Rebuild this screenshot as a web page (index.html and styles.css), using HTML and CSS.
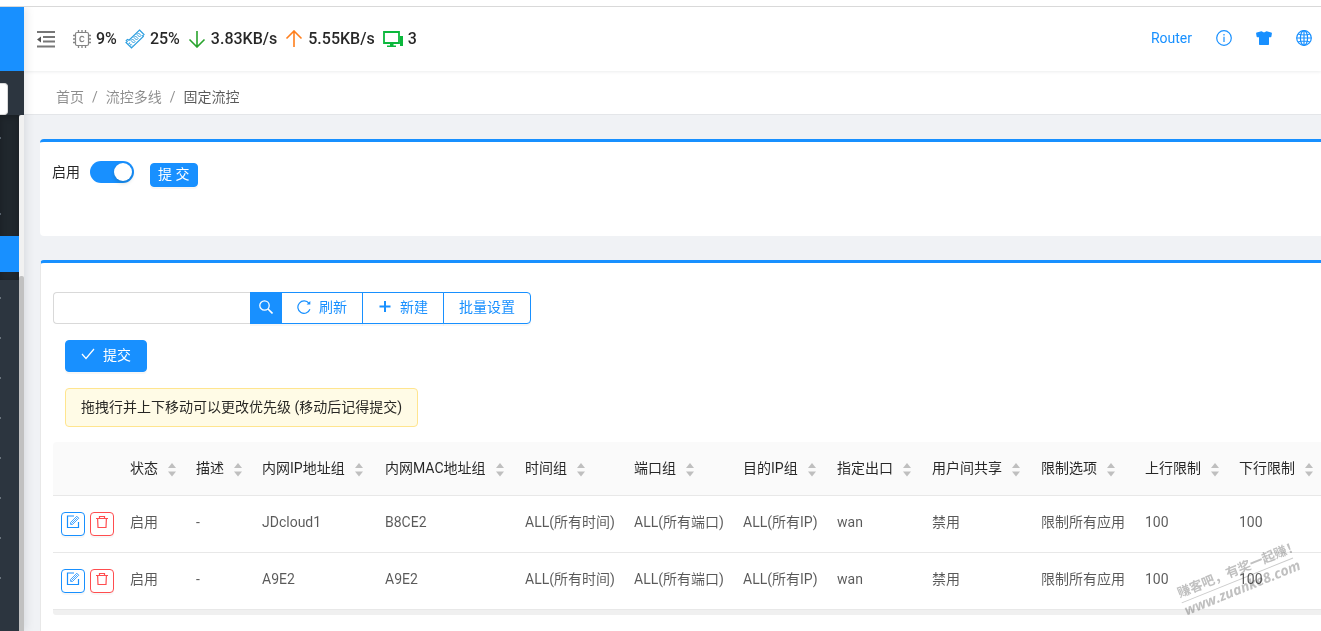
FILE: index.html
```
<!DOCTYPE html>
<html lang="zh-CN">
<head>
<meta charset="utf-8">
<title>固定流控</title>
<link rel="stylesheet" href="styles.css">
</head>
<body>
<svg class="defs" aria-hidden="true">
  <symbol id="edit" viewBox="0 0 14 14"><g fill="none" stroke="currentColor"><path d="M8 1H1.500V12.500H12.500V7" stroke-width="1.200"/><path d="M4.600 9.400V7.400L10.800 1.200L12.800 3.200L6.600 9.400ZM5.500 8.500L11.500 2.500" stroke-opacity=".8"/></g></symbol>
  <symbol id="trash" viewBox="0 0 14 14"><path d="M1 3.500H13M4.500 3.500V1.500H9.500V3.500M2.600 3.500L3 12.500H11L11.400 3.500" fill="none" stroke="currentColor" stroke-width="1.200"/></symbol>
  <symbol id="sort" viewBox="0 0 8 14"><path d="M0 5L4 0L8 5ZM0 8.500H8L4 13.500Z" fill="#bfbfbf"/></symbol>
</svg>
<div class="app">
  <aside class="side">
    <div class="logo"></div>
    <div class="side-search"><input type="text" aria-label="菜单搜索"></div>
    <div class="side-body">
      <nav class="menu">
        <div class="submenu">
          <span class="tick tick-a"></span><span class="tick tick-b"></span>
          <a class="current" href="#" aria-label="固定流控"></a>
        </div>
        <div class="items"><i></i><i></i><i></i><i></i><i></i><i></i><i></i><i></i></div>
      </nav>
      <div class="track"><div class="thumb"></div></div>
    </div>
  </aside>
  <div class="main">
    <header class="header">
      <button class="plain fold" aria-label="收起菜单"><svg width="18" height="17" viewBox="0 0 18 17"><path d="M0 1H18M6 6H18M6 10.500H18M0 15.500H18" stroke="#777" stroke-width="1.800"/><path d="M0 8.500L4 5.500V11.500Z" fill="#555"/></svg></button>
      <div class="stats">
        <span class="stat"><svg width="18" height="18" viewBox="0 0 18 18" fill="none" stroke="#858585"><rect x="2.500" y="2.500" width="13" height="13" rx="1.500" stroke-width="1.200"/><path d="M5.500 0V2.500M9 0V2.500M12.500 0V2.500M5.500 15.500V18M9 15.500V18M12.500 15.500V18M0 5.500H2.500M0 9H2.500M0 12.500H2.500M15.500 5.500H18M15.500 9H18M15.500 12.500H18" stroke-width="1.300"/><path d="M11 7.700C10.700 6.700 10 6.300 9 6.300C7.600 6.300 6.900 7.400 6.900 9S7.600 11.700 9 11.700C10 11.700 10.700 11.300 11 10.300" stroke-width="1.200"/></svg>9%</span>
        <span class="stat"><svg width="20" height="20" viewBox="0 0 20 20" fill="none" stroke="#2e9fe0"><path d="M14.500 1L19 5.500L17.700 6.800L18.300 7.400L6.500 19L1 13.500L2.200 12.300L1.300 11.500L2.500 10.500L4 11.200Z" stroke-width="1.200"/><path d="M13.500 4L16 6.500L14.500 8L12 5.500ZM10.500 7L13 9.500L11.500 11L9 8.500ZM7.500 10L10 12.500L8.500 14L6 11.500Z"/><path d="M4 14L7 17" stroke-dasharray="1 1" stroke-width="2"/></svg>25%</span>
        <span class="stat"><svg width="18" height="18" viewBox="0 0 18 18"><path d="M9 1V17M1.500 9.500L9 17L16.500 9.500" fill="none" stroke="#28a32c" stroke-width="1.600"/></svg><span class="rate">3.83KB/s</span></span>
        <span class="stat"><svg width="18" height="18" viewBox="0 0 18 18"><path d="M9 17V1M1.500 8.500L9 1L16.500 8.500" fill="none" stroke="#ff7f1c" stroke-width="1.600"/></svg><span class="rate">5.55KB/s</span></span>
        <span class="stat"><svg width="20" height="18" viewBox="0 0 20 18"><path d="M1 2H16V13H1Z" fill="none" stroke="#0bb83c" stroke-width="1.800"/><path d="M17 6H20V16H17ZM7 13H10.500V15.500H13V17H4V15.500H7Z" fill="#0bb83c"/></svg>3</span>
      </div>
      <nav class="tools">
        <a href="#">Router</a>
        <a href="#" aria-label="信息"><svg width="16" height="16" viewBox="0 0 16 16"><circle cx="8" cy="8" r="7.300" fill="none" stroke="currentColor" stroke-width="1.200"/><path d="M8 6.800V12M8 4V5.400" stroke="currentColor" stroke-width="1.200"/></svg></a>
        <a href="#" aria-label="主题"><svg width="16" height="16" viewBox="0 0 16 16"><path d="M4.500 1.500C5.500 1 6 1.300 6.500 1.700C7.500 2.400 8.500 2.400 9.500 1.700C10 1.300 10.500 1 11.500 1.500L15.200 2.400Q16 2.600 15.900 3.400L15.400 6.500Q15.200 7.300 14.400 7.200H13V14.300Q13 15 12.300 15H3.700Q3 15 3 14.300V7.200H1.600Q0.800 7.300 0.600 6.500L0.100 3.400Q0 2.600 0.800 2.400Z" fill="currentColor"/></svg></a>
        <a href="#" aria-label="语言"><svg width="16" height="16" viewBox="0 0 16 16" fill="none" stroke="currentColor" stroke-width="1.200"><circle cx="8" cy="8" r="7.300"/><ellipse cx="8" cy="8" rx="3.600" ry="7.300"/><path d="M8 .7V15.300M.7 8H15.300M2 4Q8 6 14 4M2 12Q8 10 14 12"/></svg></a>
      </nav>
    </header>
    <nav class="crumbs" aria-label="面包屑"><a href="#">首页</a><span>/</span><a href="#">流控多线</a><span>/</span><b>固定流控</b></nav>
    <main class="content">
      <section class="card enable">
        <label for="enable">启用</label>
        <input class="switch" type="checkbox" role="switch" id="enable" checked>
        <button class="btn primary small">提 交</button>
      </section>
      <section class="card list">
        <div class="bar">
          <input class="search" type="text" aria-label="搜索">
          <button class="btn primary icon-only" aria-label="搜索"><svg width="14" height="14" viewBox="0 0 14 14"><path d="M9 9L13.500 13.500" stroke="#fff" stroke-width="1.600"/><circle cx="5.500" cy="5.500" r="4.700" fill="none" stroke="#fff" stroke-width="1.300"/></svg></button>
          <button class="btn ghost"><svg width="14" height="14" viewBox="0 0 14 14"><path d="M12 3.400A6.200 6.200 0 1 0 12.900 9.300" fill="none" stroke="currentColor" stroke-width="1.200"/><path d="M13.300 1V4.600H9.600Z" fill="currentColor"/></svg>刷新</button>
          <button class="btn ghost"><svg width="14" height="14" viewBox="0 0 14 14"><path d="M7 1V12M1.500 6.500H12.500" stroke="currentColor" stroke-width="2"/></svg>新建</button>
          <button class="btn ghost last">批量设置</button>
        </div>
        <div class="notes">
          <button class="btn primary"><svg width="14" height="14" viewBox="0 0 14 14"><path d="M1 6L5 10.500L13 1" fill="none" stroke="#fff" stroke-width="1.200"/></svg>提交</button>
          <p class="alert">拖拽行并上下移动可以更改优先级 (移动后记得提交)</p>
        </div>
        <table>
          <colgroup><col class="w69"><col class="w66"><col class="w66"><col class="w123"><col class="w140"><col class="w109"><col class="w109"><col class="w94"><col class="w95"><col class="w109"><col class="w104"><col class="w94"><col></colgroup>
          <thead><tr>
            <td></td>
            <th>状态<svg><use href="#sort"/></svg></th><th>描述<svg><use href="#sort"/></svg></th><th>内网IP地址组<svg><use href="#sort"/></svg></th><th>内网MAC地址组<svg><use href="#sort"/></svg></th><th>时间组<svg><use href="#sort"/></svg></th><th>端口组<svg><use href="#sort"/></svg></th><th>目的IP组<svg><use href="#sort"/></svg></th><th>指定出口<svg><use href="#sort"/></svg></th><th>用户间共享<svg><use href="#sort"/></svg></th><th>限制选项<svg><use href="#sort"/></svg></th><th>上行限制<svg><use href="#sort"/></svg></th><th>下行限制<svg><use href="#sort"/></svg></th>
          </tr></thead>
          <tbody>
            <tr><td><div class="acts"><button class="act" aria-label="编辑"><svg><use href="#edit"/></svg></button><button class="act danger" aria-label="删除"><svg><use href="#trash"/></svg></button></div></td><td>启用</td><td>-</td><td>JDcloud1</td><td>B8CE2</td><td>ALL(所有时间)</td><td>ALL(所有端口)</td><td>ALL(所有IP)</td><td>wan</td><td>禁用</td><td>限制所有应用</td><td>100</td><td>100</td></tr>
            <tr><td><div class="acts"><button class="act" aria-label="编辑"><svg><use href="#edit"/></svg></button><button class="act danger" aria-label="删除"><svg><use href="#trash"/></svg></button></div></td><td>启用</td><td>-</td><td>A9E2</td><td>A9E2</td><td>ALL(所有时间)</td><td>ALL(所有端口)</td><td>ALL(所有IP)</td><td>wan</td><td>禁用</td><td>限制所有应用</td><td>100</td><td>100</td></tr>
          </tbody>
        </table>
        <div class="hscroll"></div>
      </section>
    </main>
  </div>
  <div class="mark"><div class="mark-top">赚客吧，有奖一起赚！</div><div class="mark-url">www.zuanke8.com</div></div>
</div>
</body>
</html>
```
FILE: styles.css
```
* { box-sizing: border-box; }
body {
  margin: 0;
  padding-top: 6px;
  height: 100vh;
  overflow: hidden;
  font: 400 14px/22px Roboto, "Noto Sans CJK SC", sans-serif;
  color: rgba(0, 0, 0, .85);
  background: #fff;
}
button, input { font: inherit; margin: 0; }
a { color: inherit; text-decoration: none; }
.defs { position: absolute; width: 0; height: 0; }
.app {
  position: relative;
  display: flex;
  height: 100%;
  overflow: hidden;
  border-top: 1px solid #d9d9d9;
  background: #f0f2f5;
}

.side {
  flex: none;
  width: 24px;
  display: flex;
  flex-direction: column;
  background: #2c353f;
  box-shadow: 2px 0 10px rgba(0, 21, 41, .1);
  z-index: 1;
}
.logo { height: 64px; background: #1890ff; }
.side-search { height: 44px; padding-top: 12px; }
.side-search input {
  display: block;
  width: 8px;
  height: 32px;
  padding: 0;
  border: 1px solid #d9d9d9;
  border-left: 0;
  border-radius: 0 4px 4px 0;
  background: #fff;
}
.side-body { flex: 1; display: flex; }
.menu { flex: 1; }
.submenu {
  display: flex;
  flex-direction: column;
  background: #20272d;
  padding: 22px 0 8px;
  box-shadow: inset 0 2px 6px rgba(0, 0, 0, .25);
}
.tick { width: 1px; height: 2px; background: #56606a; }
.tick-a { margin-bottom: 74px; }
.tick-b { margin-bottom: 21px; }
.current { height: 36px; background: #1890ff; }
.items { display: grid; gap: 38px; padding-top: 17px; }
.items i { width: 1px; height: 2px; background: #6a737c; }
.track { width: 5px; background: #f1f1f1; padding-top: 161px; border-radius: 2px 0 0 0; display: flex; }
.thumb { flex: 1; background: #c1c1c1; border-radius: 2px 2px 0 0; }

.main { flex: 1; min-width: 0; display: flex; flex-direction: column; }
.header {
  flex: none;
  height: 64px;
  display: flex;
  align-items: center;
  padding: 0 9px 2px 13px;
  background: #fff;
  box-shadow: 0 1px 3px rgba(0, 21, 41, .08);
  position: relative;
}
.plain { border: 0; padding: 0; background: none; }
.fold { display: flex; padding-top: 2px; }
.stats { display: flex; gap: 8px; margin-left: 18px; padding-top: 2px; font-size: 16px; font-weight: 500; }
.stat { display: flex; align-items: center; gap: 5px; }
.stat svg { flex: none; }
.tools { display: flex; gap: 24px; margin-left: auto; color: #1890ff; align-items: center; }
.tools a { display: flex; }
.tools svg { display: block; }
.crumbs {
  flex: none;
  height: 44px;
  padding: 15px 32px 0;
  background: #fff;
  border-bottom: 1px solid #e4e6e9;
  color: rgba(0, 0, 0, .45);
}
.crumbs span { margin: 0 8px; }
.crumbs b { font-weight: inherit; color: rgba(0, 0, 0, .65); }

.content { flex: 1; display: flex; flex-direction: column; gap: 24px; padding: 24px 0 0 16px; }
.card { background: #fff; border-top: 3px solid #1890ff; border-radius: 4px 0 0 4px; }
.enable { flex: none; height: 97px; padding: 19px 12px; display: flex; align-items: flex-start; }
.switch {
  appearance: none;
  width: 44px;
  height: 22px;
  margin: 0 16px 0 10px;
  border-radius: 11px;
  background: #1890ff;
  padding: 2px;
  display: flex;
  justify-content: flex-end;
}
.switch::before {
  content: "";
  width: 18px;
  height: 18px;
  border-radius: 9px;
  background: #fff;
  box-shadow: 0 2px 4px rgba(0, 35, 11, .2);
}
.list { flex: 1; border-left: 1px solid #e8e8e8; border-radius: 4px 0 0 0; padding: 29px 0 0 12px; }
.btn {
  display: flex;
  align-items: center;
  justify-content: center;
  gap: 8px;
  height: 32px;
  padding: 0 15px 2px;
  border: 1px solid #1890ff;
  border-radius: 4px;
  background: #fff;
  color: #1890ff;
  line-height: 20px;
  box-shadow: 0 2px 0 rgba(0, 0, 0, .03);
}
.btn.primary { background: #1890ff; color: #fff; }
.btn.small { height: 24px; padding: 0 8px 3px 7px; margin-top: 2px; }
.bar { display: flex; }
.search {
  width: 197px;
  height: 32px;
  border: 1px solid #d9d9d9;
  border-right: 0;
  border-radius: 4px 0 0 4px;
  padding: 0 11px;
}
.btn.icon-only { width: 31px; padding: 0 0 2px; border-radius: 0; }
.btn.ghost { border-radius: 0; margin-right: -1px; }
.btn.ghost.last { border-radius: 0 4px 4px 0; }
.notes { display: flex; flex-direction: column; align-items: flex-start; gap: 16px; padding: 16px 12px 15px; }
.alert {
  margin: 0;
  padding: 7px 15px 8px;
  border: 1px solid #ffe58f;
  border-radius: 4px;
  background: #fffbe6;
}

table { width: 100%; border-collapse: separate; border-spacing: 0; table-layout: fixed; }
th, td { padding: 0 0 0 8px; text-align: left; font-weight: inherit; white-space: nowrap; border-bottom: 1px solid #e8e8e8; }
thead th, thead td { height: 54px; padding-bottom: 2px; background: #fafafa; }
thead td { border-radius: 4px 0 0 0; }
th svg { width: 8px; height: 14px; margin-left: 10px; vertical-align: -4px; }
tbody td { height: 57px; padding-bottom: 5px; color: rgba(0, 0, 0, .65); }
.w66 { width: 66px; }
.w69 { width: 69px; }
.w94 { width: 94px; }
.w95 { width: 95px; }
.w104 { width: 104px; }
.w109 { width: 109px; }
.w123 { width: 123px; }
.w140 { width: 140px; }
.acts { display: flex; gap: 5px; padding-top: 5px; }
.act {
  width: 24px;
  height: 24px;
  padding: 0 0 4px;
  display: flex;
  align-items: center;
  justify-content: center;
  border: 1px solid #1890ff;
  border-radius: 4px;
  background: #fff;
  color: #1890ff;
  box-shadow: 0 2px 0 rgba(0, 0, 0, .03);
}
.act svg { width: 14px; height: 14px; }
.danger { border-color: #ff4d4f; color: #ff4d4f; }
.hscroll { height: 5px; background: #f0f0f0; border-radius: 0 0 0 3px; }

.mark {
  position: absolute;
  right: 24px;
  bottom: 34px;
  width: 120px;
  transform: rotate(-22deg);
  color: #c0c0c0;
  mix-blend-mode: multiply;
  font-weight: 700;
  pointer-events: none;
  white-space: nowrap;
}
.mark-top { font-size: 13px; line-height: 18px; border-bottom: 1px solid #ccc; }
.mark-url { font: italic 700 14px/16px "Open Sans", sans-serif; }
```
